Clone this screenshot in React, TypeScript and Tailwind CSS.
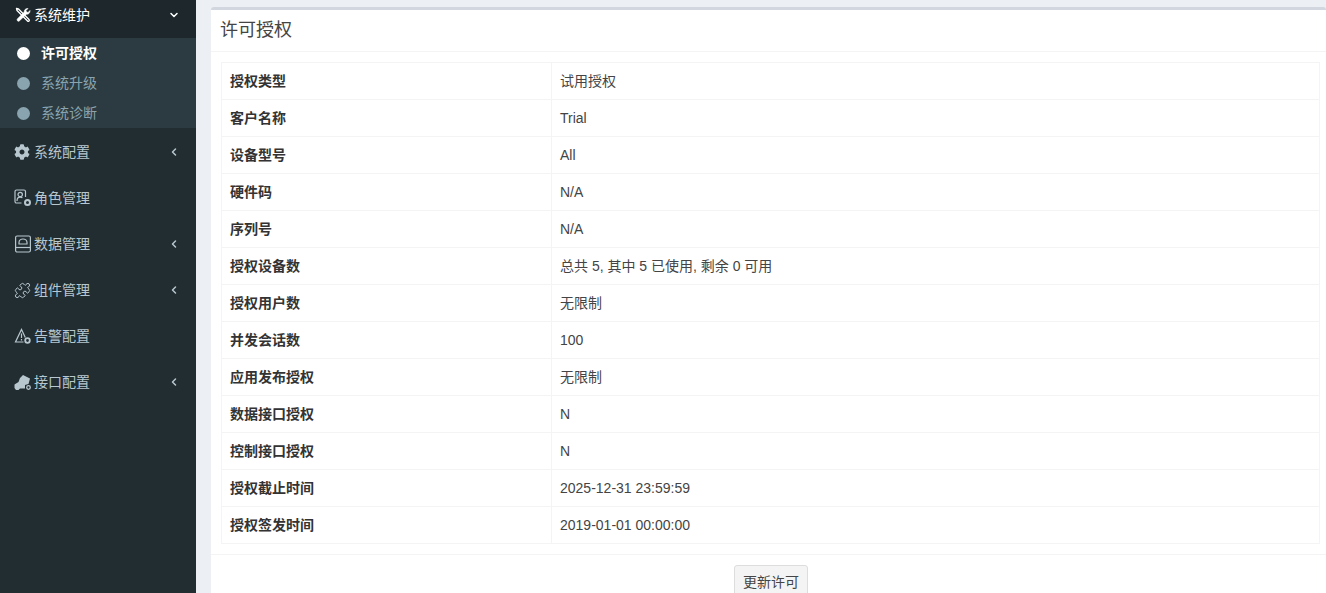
import { ChevronDown, ChevronLeft, Puzzle } from "lucide-react";
import { FaCog } from "react-icons/fa";
import type { ReactNode } from "react";

const FONT = "font-['Liberation_Sans','Noto_Sans_CJK_SC',sans-serif]";

function ToolsIcon() {
  return (
    <svg viewBox="0 0 16 16" className="h-[16px] w-[16px]" fill="none" stroke="currentColor" strokeLinejoin="round">
      <path d="M4 5.500 2 3.500 1.500 1.500 3.500 2l2 2 8.500 8.500a1 1 0 0 1-1.500 1.500z" strokeWidth="1.300" />
      <path d="M2.300 12 9.200 5.100C9 3.200 10.400 1.300 13 1.500l-2 2 .5 1.500 1.500.5 2-2c.2 2.600-1.700 4-3.600 3.800L4 14.200a1.500 1.500 0 0 1-1.700-2.200z" fill="currentColor" strokeWidth="0.600" />
    </svg>
  );
}

function RoleIcon() {
  return (
    <svg viewBox="0 0 18 18" className="h-[18px] w-[18px]" fill="none" stroke="currentColor" strokeWidth="1.200">
      <path d="M7.500 14H2.500A1.500 1.500 0 0 1 1 12.500v-10A1.500 1.500 0 0 1 2.500 1h7.500A1.500 1.500 0 0 1 11.500 2.500V8" />
      <circle cx="6.200" cy="5.500" r="2.200" />
      <path d="M3 12c0-2.500 1.300-3.800 3.200-3.800 .9 0 1.600.2 2.200.7" />
      <circle cx="13.500" cy="13.500" r="2.500" strokeWidth="2" />
    </svg>
  );
}

function DriveIcon() {
  return (
    <svg viewBox="0 0 18 18" className="h-[18px] w-[18px]" fill="none" stroke="currentColor" strokeWidth="1.200">
      <rect x="1.600" y="1" width="14.800" height="16" rx="1.500" />
      <path d="M1.600 12.500h14.800" />
      <path d="M5 9V7.500a4 3.500 0 0 1 8 0V9z" />
    </svg>
  );
}

function AlertIcon() {
  return (
    <svg viewBox="0 0 18 18" className="h-[18px] w-[18px]" fill="none" stroke="currentColor" strokeWidth="1.200">
      <path d="M9.500 15H1.500L7.500 2.500l3.800 8" />
      <path d="M7.500 6.500v4.500M7.500 12v1.500" />
      <circle cx="13.500" cy="13.500" r="2.300" strokeWidth="1.800" />
    </svg>
  );
}

function ApiIcon() {
  return (
    <svg viewBox="0 0 18 18" className="h-[18px] w-[18px]" fill="currentColor">
      <path d="M.5 11.500 4.500 9 6 5l3-3 7 3.500-1.500 5.500-3.500 1v3.500H6L4.500 17H2L.5 15z" />
      <circle cx="14.500" cy="14.500" r="1.800" fill="none" stroke="currentColor" strokeWidth="1.300" />
    </svg>
  );
}

type MenuItemProps = {
  icon: ReactNode;
  label: string;
  hasChildren?: boolean;
};

function MenuItem({ icon, label, hasChildren }: MenuItemProps) {
  return (
    <div className="flex h-[46px] items-center pt-[2px] pr-[16px] pl-[14px] text-[14px] text-[#b8c7ce]">
      <span className="flex w-[20px] shrink-0 justify-start">{icon}</span>
      <span className="flex-1">{label}</span>
      {hasChildren ? <ChevronLeft size={12} strokeWidth={3} /> : null}
    </div>
  );
}

function SubItem({ label, active }: { label: string; active?: boolean }) {
  return (
    <div className={`flex h-[30px] items-center pl-[17px] text-[14px] ${active ? "font-bold text-white" : "text-[#8aa4af]"}`}>
      <span className={`mr-[11px] h-[13px] w-[13px] rounded-full ${active ? "bg-white" : "bg-[#8aa4af]"}`} />
      {label}
    </div>
  );
}

function Sidebar() {
  return (
    <aside className="w-[196px] shrink-0 bg-[#222d32]">
      <div className="flex h-[38px] items-center bg-[#1e282c] pr-[16px] pb-[8px] pl-[15px] text-[14px] text-white">
        <span className="flex w-[19px] shrink-0"><ToolsIcon /></span>
        <span className="flex-1">系统维护</span>
        <ChevronDown size={12} strokeWidth={3} />
      </div>
      <div className="bg-[#2c3b41]">
        <SubItem label="许可授权" active />
        <SubItem label="系统升级" />
        <SubItem label="系统诊断" />
      </div>
      <MenuItem icon={<FaCog size={16} />} label="系统配置" hasChildren />
      <MenuItem icon={<RoleIcon />} label="角色管理" />
      <MenuItem icon={<DriveIcon />} label="数据管理" hasChildren />
      <MenuItem icon={<Puzzle size={17} strokeWidth={1.400} />} label="组件管理" hasChildren />
      <MenuItem icon={<AlertIcon />} label="告警配置" />
      <MenuItem icon={<ApiIcon />} label="接口配置" hasChildren />
    </aside>
  );
}

const rows = [
  ["授权类型", "试用授权"],
  ["客户名称", "Trial"],
  ["设备型号", "All"],
  ["硬件码", "N/A"],
  ["序列号", "N/A"],
  ["授权设备数", "总共 5, 其中 5 已使用, 剩余 0 可用"],
  ["授权用户数", "无限制"],
  ["并发会话数", "100"],
  ["应用发布授权", "无限制"],
  ["数据接口授权", "N"],
  ["控制接口授权", "N"],
  ["授权截止时间", "2025-12-31 23:59:59"],
  ["授权签发时间", "2019-01-01 00:00:00"],
];

export default function App() {
  return (
    <div className={`${FONT} flex h-[593px] w-[1326px] overflow-hidden bg-[#ecf0f5] text-[14px] text-[#333]`}>
      <Sidebar />
      <main className="flex-1 pt-[7px] pl-[15px]">
        <section className="rounded-t-[3px] border-t-[3px] border-[#d2d6de] bg-white">
          <div className="flex h-[42px] items-center border-b border-[#f4f4f4] pr-[10px] pb-[2px] pl-[9px]">
            <h1 className="text-[18px] leading-none font-normal text-[#444]">许可授权</h1>
          </div>
          <div className="border-b border-[#f4f4f4] py-[10px] pr-[6px] pl-[10px]">
            <table className="w-full border-collapse border border-[#f4f4f4]">
              <tbody>
                {rows.map(([name, value]) => (
                  <tr key={name} className="h-[37px]">
                    <th className="w-[330px] border border-[#f4f4f4] px-[8px] text-left font-bold">{name}</th>
                    <td className="border border-[#f4f4f4] px-[8px] text-[#444]">{value}</td>
                  </tr>
                ))}
              </tbody>
            </table>
          </div>
          <div className="flex justify-center pt-[10px] pl-[5px]">
            <button className="h-[34px] rounded-[3px] border border-[#ddd] bg-[#f4f4f4] px-[8px] text-[14px] text-[#444]">
              更新许可
            </button>
          </div>
        </section>
      </main>
    </div>
  );
}
